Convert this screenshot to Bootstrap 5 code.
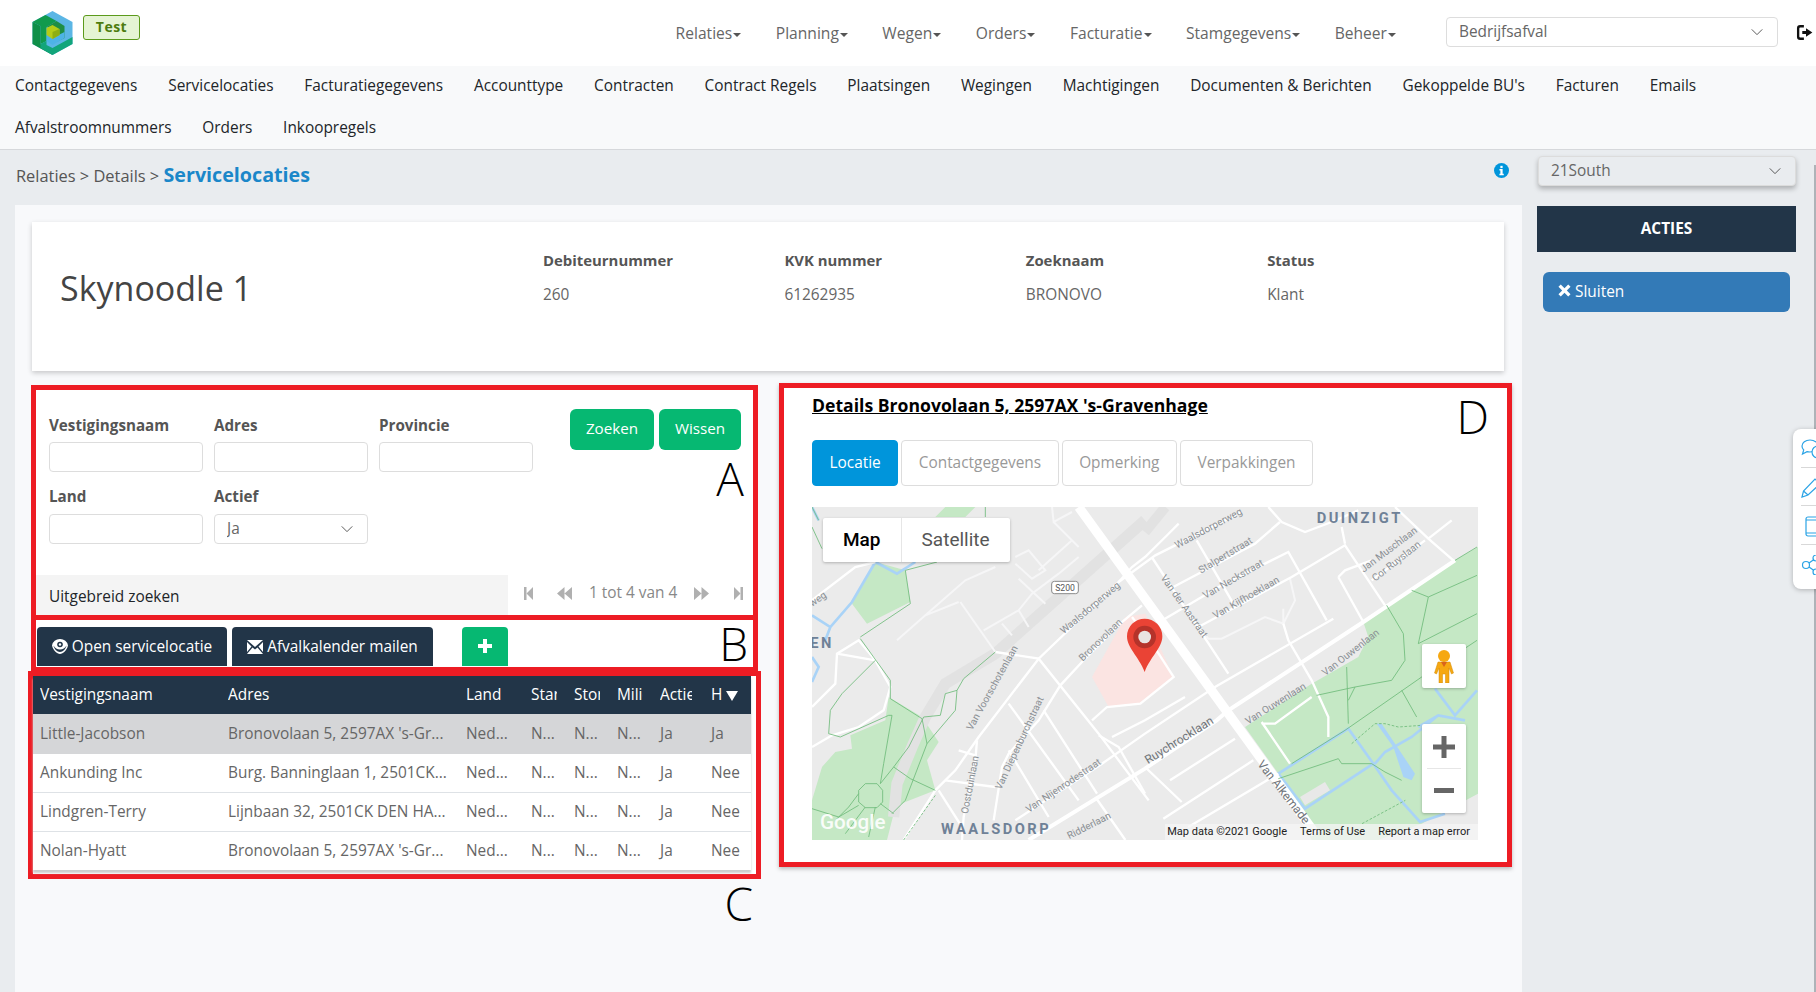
<!DOCTYPE html>
<html lang="nl">
<head>
    <meta charset="UTF-8">
    <meta name="viewport" content="width=device-width, initial-scale=1.0">
    <title>Relaties - Servicelocaties</title>
    <link href="https://cdn.jsdelivr.net/npm/bootstrap@5.3.0/dist/css/bootstrap.min.css" rel="stylesheet">
    <style>
        body { font-family: "Open Sans", sans-serif; font-size: 15.4px; color: #555; background: #e9ecef; overflow: hidden; position: relative; min-height: 992px; }
        .topbar { height: 66px; flex-wrap: nowrap; justify-content: flex-start; padding: 0 0 0 32px; }
        .logo-mark { width: 41px; height: 44px; }
        .env-tag { background: #e5f4d4; border: 1px solid #5c9a1c; border-radius: 3px; color: #4d7c0f; font-weight: 700; font-size: 14px; letter-spacing: .5px; width: 57px; height: 25px; line-height: 22px; text-align: center; margin: 0 0 11px 10px; }
        .mainmenu { gap: 34.5px; margin-left: auto; }
        .mainmenu .nav-link { padding: 0; color: #666; font-size: 15.6px; line-height: 20px; }
        .mainmenu .dropdown-toggle::after { margin-left: 1px; vertical-align: 2px; border-top: 4px solid #555; border-right: 4px solid transparent; border-left: 4px solid transparent; border-bottom: 0; }
        .select-box { background-image: url("data:image/svg+xml,%3csvg xmlns='http://www.w3.org/2000/svg' viewBox='0 0 16 16'%3e%3cpath fill='none' stroke='%23444' stroke-width='1' d='M2 5l6 6 6-6'/%3e%3c/svg%3e"); background-size: 18px 14px; background-position: right 11px center; font-size: 15.4px; color: #666; padding: 0 30px 0 12px; height: 30px; border-radius: 4px; border-color: #ddd; }
        .unit-select { width: 332px; margin: 0 18px 3px 50px; flex: none; }
        .logout-mark { width: 20px; height: 17px; flex: none; margin-bottom: 2px; }
        .subbar { background: #f8f9fa; border-bottom: 1px solid #d6d8db; padding: 1px 15px 3px; column-gap: 30.8px; row-gap: 4px; height: 84px; }
        .subbar a { color: #212529; text-decoration: none; line-height: 38px; }
        .crumbbar { height: 55px; padding: 0 20px 0 16px; }
        .crumb-text { font-size: 16.4px; margin-bottom: 5px; }
        .crumb-active { color: #1b87c9; font-size: 19.700px; font-weight: 700; }
        .info-mark { width: 15px; height: 15px; margin: 0 29px 15px auto; }
        .branch-select { width: 258px; background-color: #e9ecef; box-shadow: 0 3px 5px rgba(0,0,0,.25); border-color: #dcdcdc; margin-bottom: 13px; }
        .mainarea { padding-left: 15px; min-height: 787px; }
        .contentpane { width: 1507px; flex: none; background: #f8f9fb; padding: 17px 0 0 17px; }
        .sidepane { width: 294px; padding: 1px 0 0 15px; }
        .acties-head { width: 259px; height: 46px; background: #223548; color: #fff; font-weight: 700; padding-bottom: 1px; }
        .btn-sluiten { width: 247px; height: 40px; margin: 20px 0 0 6px; background: #337ab7; color: #fff; border: 0; font-size: 15.4px; text-align: left; padding: 0 15px 1px; }
        .headcard { width: 1472px; height: 149px; border: 0; border-radius: 0; box-shadow: 0 2px 5px rgba(0,0,0,.2); padding: 27px 0 0 28px; flex-direction: row; }
        .headcard h1 { width: 483px; flex: none; font-size: 34px; font-weight: 400; color: #444; margin: 19px 0 0; }
        .headfield { width: 241.4px; flex: none; font-size: 15.4px; line-height: 22px; color: #666; }
        .headfield b { display: block; margin-bottom: 13px; font-weight: 700; font-size: 14.9px; color: #555; }
        .lowerrow { margin-top: 14px; align-items: flex-start; }
        .leftcol { width: 727px; margin-left: -1px; }
        .redbox { border: 5px solid #ed1c24; background: #fff; position: relative; }
        .boxletter { position: absolute; color: #000; font-size: 46px; line-height: 46px; font-weight: 300; }
        .letter-a { right: 9px; top: 65px; }
        .letter-b { right: 5px; top: 0; }
        .letter-c { right: 3px; bottom: -52px; }
        .letter-d { right: 18px; top: 5px; }
        .boxa { height: 235px; }
        .fieldgrid { display: grid; grid-template-columns: repeat(3, 154px); column-gap: 11px; row-gap: 13px; padding: 25px 0 0 13px; height: 154px; }
        .fieldgrid label { display: block; font-weight: 700; font-size: 15.2px; line-height: 20px; margin-bottom: 7px; color: #555; }
        .fieldgrid > div:nth-child(n+4) label { margin-bottom: 8px; }
        .fieldgrid .form-control { height: 30px; border-color: #ddd; border-radius: 4px; }
        .searchbtns { gap: 5px; padding: 19px 12px 0 37px; }
        .btn-groen { background: #06b872; color: #fff; border: 0; height: 41px; padding: 0 0 2px; font-size: 15.2px; }
        .btn-zoeken { width: 84px; }
        .btn-wissen { width: 82px; }
        .searchfoot { margin-top: 31px; height: 40px; }
        .morefilters { width: 472px; background: #f4f4f4; color: #212529; padding: 11px 13px 0; line-height: 22px; }
        .pager-row { color: #888; padding: 0 0 4px 16px; }
        .pager-row svg { fill: #b0b0b0; height: 13px; flex: none; }
        .pager-count { margin: 0 17px; }
        .boxb { height: 52px; border-top: 0; padding: 7px 0 0 1px; gap: 5px; }
        .btn-donker { background: #223548; color: #fff; border: 0; height: 39px; padding: 0; font-size: 15.4px; border-radius: 4px 4px 0 0; }
        .btn-donker svg { vertical-align: -2px; }
        .btn-open { width: 190px; }
        .btn-mail { width: 201px; }
        .btn-plus { width: 46px; height: 39px; margin-left: 24px; border-radius: 4px 4px 0 0; }
        .boxc { width: 733px; margin: -1px 0 0 -3px; height: 208px; padding-right: 4px; background: #fff; }
        .loctable { table-layout: fixed; width: 718px; margin: 0; box-shadow: 0 3px 2px #ccc; }
        .loctable th { background: #223548; color: #fff; font-weight: 400; height: 38px; padding: 0 10px 0 7px; vertical-align: middle; border: 0; white-space: nowrap; }
        .loctable th span { display: block; overflow: hidden; }
        .loctable td { height: 39px; padding: 0 7px; vertical-align: middle; color: #666; white-space: nowrap; border-bottom: 1px solid #dee2e6; background: #fff; }
        .loctable tr.is-picked td { background: #d5d6d8; border-color: #d5d6d8; }
        .loctable tr:last-child td { border-bottom: 0; }
        .c-naam { width: 188px; } .c-adres { width: 238px; } .c-land { width: 65px; } .c-kort { width: 43px; } .c-actief { width: 51px; } .c-h { width: 47px; }
        .loctable th.kolom-a { padding-right: 12px; }
        .loctable th.kolom-h { padding-right: 4px; }
        .boxd { width: 733px; height: 484px; margin: -2px 0 0 21px; padding: 0 0 0 28px; box-shadow: 0 2px 4px rgba(0,0,0,.25); }
        .boxd h2 { font-size: 17.6px; font-weight: 700; color: #000; text-decoration: underline; margin: 0; padding-top: 5px; line-height: 24px; }
        .locatie-tabs { gap: 3px; margin-top: 23px; }
        .locatie-tabs .nav-link { height: 46px; line-height: 43px; padding: 0 16.5px; color: #999; border: 1px solid #ddd; border-radius: 4px; font-size: 15.4px; }
        .locatie-tabs .nav-link.active { background: #0095db; border-color: #0095db; color: #fff; }
        .mapframe { position: relative; width: 666px; height: 333px; margin-top: 21px; overflow: hidden; }
        .mapframe > svg { display: block; }
        .map-type { position: absolute; left: 11px; top: 11px; height: 44px; background: #fff; box-shadow: 0 1px 3px rgba(0,0,0,.25); border-radius: 2px; font-family: Roboto, sans-serif; font-size: 19px; line-height: 44px; }
        .map-type span { display: inline-block; padding: 0 20px; color: #565656; }
        .map-type .is-on { color: #000; font-weight: 500; border-right: 1px solid #e6e6e6; }
        .map-ctl { position: absolute; left: 610px; width: 44px; background: #fff; box-shadow: 0 1px 3px rgba(0,0,0,.25); border-radius: 2px; }
        .map-peg { top: 137px; height: 44px; padding: 6px 0 0 12px; }
        .map-zoom { top: 217px; height: 89px; }
        .map-zoom svg { display: block; }
        .map-credit { position: absolute; right: 0; bottom: 0; height: 16px; background: rgba(245,245,245,.75); font-family: Roboto, sans-serif; font-size: 11px; line-height: 16px; color: #222; padding: 0 8px 0 2px; display: flex; gap: 13px; white-space: nowrap; }
        .sidewidget { position: absolute; left: 1793px; top: 429px; width: 40px; height: 160px; background: #fff; border-radius: 8px; box-shadow: 0 1px 5px rgba(0,0,0,.25); padding-left: 8px; }
        .sidewidget div { height: 38.5px; border-bottom: 1px solid #d8d8d8; padding-top: 10px; }
        .sidewidget div:last-child { border-bottom: 0; }
        .sidewidget svg { display: block; fill: none; stroke: #2ba3e5; stroke-width: 1.2; }
        .scrollline { position: absolute; right: 0; top: 165px; bottom: 0; width: 2px; background: #aeb3b8; }
    </style>
</head>
<body>
    <!-- Top navigation -->
    <nav class="navbar bg-white topbar">
        <svg class="logo-mark" viewBox="0 0 40 44">
            <polygon points="20,0 40,11 40,33 20,44 0,33 0,11" fill="#5bb6e5"/>
            <polygon points="0,11 13,4 24,10 14,16 14,30 8,33 8,15" fill="#119a4d"/>
            <polygon points="0,11 8,15 8,33 20,44 0,33" fill="#0f8f48"/>
            <polygon points="14,16 24,10 32,15 32,27 24,31 24,20 18,17" fill="#1f8e44"/>
            <polygon points="14,30 14,34 20,37 40,26 40,33 20,44 8,37 8,33" fill="#12a57a"/>
            <polygon points="14,30 14,24 20,27 32,21 32,27 20,34" fill="#4db3e6"/>
            <polygon points="14,17 20,14 27,18 27,24 20,28 14,24" fill="#b5cc18"/>
            <polygon points="20,21 27,18 27,24 20,28" fill="#8fae12"/>
        </svg>
        <div class="env-tag">Test</div>
        <div class="nav mainmenu flex-nowrap">
            <a class="nav-link dropdown-toggle" href="#">Relaties</a>
            <a class="nav-link dropdown-toggle" href="#">Planning</a>
            <a class="nav-link dropdown-toggle" href="#">Wegen</a>
            <a class="nav-link dropdown-toggle" href="#">Orders</a>
            <a class="nav-link dropdown-toggle" href="#">Facturatie</a>
            <a class="nav-link dropdown-toggle" href="#">Stamgegevens</a>
            <a class="nav-link dropdown-toggle" href="#">Beheer</a>
        </div>
        <select class="form-select select-box unit-select"><option>Bedrijfsafval</option></select>
        <svg class="logout-mark" viewBox="0 0 18 16"><path fill="#111" d="M7 1H3.500A3 3 0 0 0 .5 4v8a3 3 0 0 0 3 3H7v-2.200H3.700a1 1 0 0 1-1-1V4.200a1 1 0 0 1 1-1H7zM9 4v2.500H5.500v3H9V12l6-4z"/></svg>
    </nav>

    <!-- Tabs of the relation -->
    <div class="d-flex flex-wrap align-content-start subbar">
        <a href="#">Contactgegevens</a>
        <a href="#">Servicelocaties</a>
        <a href="#">Facturatiegegevens</a>
        <a href="#">Accounttype</a>
        <a href="#">Contracten</a>
        <a href="#">Contract Regels</a>
        <a href="#">Plaatsingen</a>
        <a href="#">Wegingen</a>
        <a href="#">Machtigingen</a>
        <a href="#">Documenten &amp; Berichten</a>
        <a href="#">Gekoppelde BU's</a>
        <a href="#">Facturen</a>
        <a href="#">Emails</a>
        <a href="#">Afvalstroomnummers</a>
        <a href="#">Orders</a>
        <a href="#">Inkoopregels</a>
    </div>

    <!-- Breadcrumb -->
    <div class="d-flex align-items-center crumbbar">
        <span class="crumb-text">Relaties &gt; Details &gt; <span class="crumb-active">Servicelocaties</span></span>
        <svg class="info-mark" viewBox="0 0 16 16"><circle cx="8" cy="8" r="8" fill="#0095db"/><rect x="6.800" y="3" width="2.400" height="2.400" fill="#fff"/><path fill="#fff" d="M5.800 6.500h3.400v5h1.200v1.500H5.800v-1.500h1v-3.500h-1z"/></svg>
        <select class="form-select select-box branch-select"><option>21South</option></select>
    </div>

    <div class="d-flex mainarea">
        <div class="contentpane">
            <div class="card headcard">
                <h1>Skynoodle 1</h1>
                <div class="headfield"><b>Debiteurnummer</b>260</div>
                <div class="headfield"><b>KVK nummer</b>61262935</div>
                <div class="headfield"><b>Zoeknaam</b>BRONOVO</div>
                <div class="headfield"><b>Status</b>Klant</div>
            </div>

            <div class="d-flex lowerrow">
                <div class="leftcol">
                    <!-- A: search form -->
                    <div class="redbox boxa">
                        <span class="boxletter letter-a">A</span>
                        <div class="d-flex">
                            <div class="fieldgrid">
                                <div><label>Vestigingsnaam</label><input type="text" class="form-control"></div>
                                <div><label>Adres</label><input type="text" class="form-control"></div>
                                <div><label>Provincie</label><input type="text" class="form-control"></div>
                                <div><label>Land</label><input type="text" class="form-control"></div>
                                <div><label>Actief</label><select class="form-select select-box"><option>Ja</option></select></div>
                            </div>
                            <div class="d-flex align-items-start searchbtns">
                                <button class="btn btn-groen btn-zoeken">Zoeken</button>
                                <button class="btn btn-groen btn-wissen">Wissen</button>
                            </div>
                        </div>
                        <div class="d-flex searchfoot">
                            <div class="morefilters">Uitgebreid zoeken</div>
                            <div class="d-flex align-items-center pager-row">
                                <svg viewBox="0 0 9 13" width="9"><rect width="2.500" height="13"/><path d="M9 0v13L2.500 6.500z"/></svg>
                                <svg viewBox="0 0 15 13" width="15" class="ms-4"><path d="M7.500 0v13L0 6.500zM15 0v13L7.500 6.500z"/></svg>
                                <span class="pager-count">1 tot 4 van 4</span>
                                <svg viewBox="0 0 15 13" width="15"><path d="M0 0v13l7.500-6.500zM7.500 0v13L15 6.500z"/></svg>
                                <svg viewBox="0 0 9 13" width="11" class="ms-4"><rect x="6.500" width="2.500" height="13"/><path d="M0 0v13l6.500-6.500z"/></svg>
                            </div>
                        </div>
                    </div>

                    <!-- B: actions -->
                    <div class="redbox boxb d-flex">
                        <span class="boxletter letter-b">B</span>
                        <button class="btn btn-donker btn-open">
                            <svg viewBox="0 0 16 15" width="16" height="15"><path fill="#fff" d="M8 0a8 7.500 0 0 1 8 6.500C15 11 11 15 8 15S1 11 0 6.500A8 7.500 0 0 1 8 0z"/><path fill="#223548" d="M1.500 6.500C3 9 5 10.500 8 10.500s5-1.500 6.500-4c-.5 3-3.500 6.500-6.500 6.500S2 9.500 1.500 6.500z"/><circle cx="8" cy="5.500" r="2.800" fill="#223548"/><circle cx="8" cy="5.500" r="1.200" fill="#fff"/></svg>
                            Open servicelocatie
                        </button>
                        <button class="btn btn-donker btn-mail">
                            <svg viewBox="0 0 16 14" width="16" height="14"><path fill="#fff" d="M0 0h16L8 7zM0 2l4.500 4.500L0 12zM16 2v10l-4.500-5.500zM5.500 7.500 8 9.500l2.500-2L16 14H0z"/></svg>
                            Afvalkalender mailen
                        </button>
                        <button class="btn btn-groen btn-plus">
                            <svg viewBox="0 0 14 14" width="14" height="14" class="d-block mx-auto"><path fill="#fff" d="M5 0h4v5h5v4H9v5H5V9H0V5h5z"/></svg>
                        </button>
                    </div>

                    <!-- C: locations -->
                    <div class="redbox boxc">
                        <span class="boxletter letter-c">C</span>
                        <table class="table loctable">
                            <colgroup>
                                <col class="c-naam"><col class="c-adres"><col class="c-land"><col class="c-kort"><col class="c-kort"><col class="c-kort"><col class="c-actief"><col class="c-h">
                            </colgroup>
                            <thead>
                                <tr>
                                    <th><span>Vestigingsnaam</span></th>
                                    <th><span>Adres</span></th>
                                    <th><span>Land</span></th>
                                    <th><span>Starter</span></th>
                                    <th><span>Stort</span></th>
                                    <th><span>Milieu</span></th>
                                    <th class="kolom-a"><span>Actief</span></th>
                                    <th class="kolom-h"><span>H&nbsp;<svg viewBox="0 0 12 10" width="12" height="10"><path fill="#fff" d="M0 0h12L6 10z"/></svg></span></th>
                                </tr>
                            </thead>
                            <tbody id="locRows"></tbody>
                        </table>
                    </div>
                </div>

                <!-- D: details of the selected location -->
                <div class="redbox boxd">
                    <span class="boxletter letter-d">D</span>
                    <h2>Details Bronovolaan 5, 2597AX 's-Gravenhage</h2>
                    <div class="nav locatie-tabs">
                        <a class="nav-link active" href="#">Locatie</a>
                        <a class="nav-link" href="#">Contactgegevens</a>
                        <a class="nav-link" href="#">Opmerking</a>
                        <a class="nav-link" href="#">Verpakkingen</a>
                    </div>
                    <div class="mapframe">
                        <svg viewBox="0 0 1998 999" width="666" height="333" font-family="Roboto, sans-serif">
                            <rect width="1998" height="999" fill="#ebebeb"/>
                            <!-- parks -->
                            <g fill="#c5e8c5">
                                <polygon points="1929,160 1719,295 1654,345 1669,390 1639,450 1499,530 1299,660 1399,800 1499,999 1700,999 1829,950 1998,860 1998,120"/>
                                <polygon points="190,165 280,190 295,285 165,350 120,290"/>
                                <polygon points="400,0 490,0 460,30 370,30"/>
                                <polygon points="230,570 330,630 380,705 345,760 370,850 280,885 250,900 225,999 0,999 0,880 30,780 70,735 120,725 115,685 220,640"/>
                            </g>
                            <polygon points="1464,870 1539,825 1554,850 1479,895" fill="#e8e8e8"/>
                            <polygon points="940,330 1000,320 1084,510 985,590 890,600 840,510" fill="#fbe4e2"/>
                            <!-- rail -->
                            <path d="M999,40 550,440 400,530 340,630 300,720 255,830 245,930" fill="none" stroke="#e2e2e2" stroke-width="34"/>
                            <path d="M999,75 1060,0" fill="none" stroke="#e2e2e2" stroke-width="30"/>
                            <!-- water -->
                            <g fill="none" stroke="#a9d3f7" stroke-width="8">
                                <path d="M190,165 120,285 55,360 0,325M55,360 40,400M0,450 20,480 0,525M190,165 255,200 310,165M0,0 20,40"/>
                                <path d="M1399,800 1609,665 1684,770 1479,905zM1689,770 1719,735 1799,690 1879,625 1959,640M1869,545 1929,625 1995,550M1879,625 1819,660M1684,770 1739,850 1824,945 1899,920"/>
                            </g>
                            <polygon points="1694,650 1709,650 1809,800 1799,820 1774,810 1744,720" fill="#a9d3f7"/>
                            <!-- minor roads -->
                            <g fill="none" stroke="#f6f6f7" stroke-width="6">
                                <path d="M255,400 340,325 460,220 550,180M445,285 550,435M515,370 620,310 660,260 740,200 800,150M570,350 600,385M620,310 650,360M610,150 650,130 700,190 660,215 610,170M680,190 780,100M620,215 700,290M720,0 725,45 780,15M725,45 800,120M340,325 440,285"/>
                                <path d="M1159,360 1189,395 1229,395 1359,330 1414,350 1449,280 1434,215M1414,305 1414,350"/>
                            </g>
                            <!-- roads -->
                            <g fill="none" stroke="#fff" stroke-width="7">
                                <path d="M0,280 130,180 190,165M0,600 70,530 75,440 140,400 190,460 235,540 215,610 140,660 60,685 0,720M75,440 190,460"/>
                                <path d="M500,690 680,455 920,225 1030,145 1289,15M500,690 430,790 370,850 275,999"/>
                                <path d="M545,940 570,780 590,740 680,640 745,535 810,465 930,345 990,295"/>
                                <path d="M550,435 680,455 860,680 1010,880M590,590 800,880M695,610 855,860M590,730 710,930M850,870 940,999"/>
                                <path d="M495,700 490,760 455,930 450,999M400,820 550,840M440,730 490,745M380,850 450,960"/>
                                <path d="M610,940 870,770 999,680 1209,540 1564,335"/>
                                <path d="M840,640 885,600 985,590 1085,510 1040,440 960,330"/>
                                <path d="M900,690 999,640 1119,570M860,685 920,720 999,860"/>
                                <path d="M1019,150 1249,500M1154,100 1264,290M1074,245 1329,110 1404,45M1059,335 1229,235 1429,135 1544,340M1159,360 1439,210 1599,115 1719,295M1579,210 1654,345M1579,210 1599,190 1679,160M1679,220 1839,100"/>
                                <path d="M1369,0 1409,45 1479,75 1559,45 1639,10M1749,0 1849,95 1924,160M1589,60 1599,110M1849,95 1919,40"/>
                                <path d="M1414,350 1429,400 1499,520 1549,630 1549,690M1349,650 1389,650 1499,570M1349,645 1434,770"/>
                                <path d="M1074,820 1269,695M1054,935 1324,760M999,780 1109,885M1129,960 1399,800"/>
                                <path d="M920,225 960,180 999,150 1060,90 1100,50"/>
                            </g>
                            <path d="M650,999 999,785 1214,640 1249,610 1654,345 1929,160" fill="none" stroke="#fff" stroke-width="12"/>
                            <path d="M800,0 1510,980" fill="none" stroke="#fff" stroke-width="28"/>
                            <!-- footpaths -->
                            <g fill="none" stroke="#6dbb7a" stroke-width="2.500">
                                <path d="M145,390 295,290 280,190 375,165M145,395 235,520 235,575 330,635 345,710 430,610 435,550 400,560 385,625 335,630 290,720 245,780 295,815 370,850M345,710 280,880 240,920M550,435 455,515 435,550"/>
                                <path d="M190,460 90,560 55,610 50,680 85,690 230,625 240,625 215,770 205,830M205,830 245,780M140,895 80,930 0,905M160,900 100,980M190,900 170,990M205,890 245,920M140,860 110,900 75,935M0,60 30,125M520,0 520,30M0,0 20,40"/>
                                <polygon points="160,830 195,830 212,850 212,885 195,902 160,902 140,885 140,850"/>
                                <path d="M1439,770 1599,670 1829,510 1995,400M1724,295 1774,380 1779,460 1739,520 1629,540 1514,565M1604,480 1609,650M1769,550 1814,630M1799,250 1849,270 1819,410M1849,270 1995,205M1819,410 1995,320M1929,160 1995,120M1629,540 1609,580M1399,815 1579,755 1589,770 1679,770 1719,795 1769,820"/>
                                <path d="M1619,710 1689,650 1719,650 1759,660 1829,655M275,999 370,865M1650,950 1780,880" stroke-dasharray="8 5"/>
                            </g>
                            <!-- road names -->
                            <g fill="#8a8f94" font-size="30">
                                <text transform="translate(755,382) rotate(-40)">Waalsdorperweg</text>
                                <text transform="translate(812,464) rotate(-44)">Bronovolaan</text>
                                <text transform="translate(480,672) rotate(-61)">Van Voorschotenlaan</text>
                                <text transform="translate(567,850) rotate(-65)">Van Diepenburchstraat</text>
                                <text transform="translate(467,922) rotate(-79)">Oostduinlaan</text>
                                <text transform="translate(650,918) rotate(-34)">Van Nijenrodestraat</text>
                                <text transform="translate(772,997) rotate(-27)">Ridderlaan</text>
                                <text transform="translate(0,300) rotate(-35)">weg</text>
                                <text transform="translate(1095,125) rotate(-28)">Waalsdorperweg</text>
                                <text transform="translate(1167,200) rotate(-31)">Stalpertstraat</text>
                                <text transform="translate(1180,276) rotate(-30)">Van Neckstraat</text>
                                <text transform="translate(1210,336) rotate(-30)">Van Kijfhoeklaan</text>
                                <text transform="translate(1045,212) rotate(55)">Van der Aastraat</text>
                                <text transform="translate(1655,197) rotate(-37)">Jan Muschlaan</text>
                                <text transform="translate(1690,224) rotate(-38)">Cor Ruyslaan</text>
                                <text transform="translate(1540,508) rotate(-38)">Van Ouwenlaan</text>
                                <text transform="translate(1308,653) rotate(-32)">Van Ouwenlaan</text>
                            </g>
                            <g fill="#6f7479" font-size="36">
                                <text transform="translate(1008,772) rotate(-32)">Ruychrocklaan</text>
                                <text transform="translate(1335,772) rotate(52)">Van Alkemade</text>
                            </g>
                            <g fill="#6f8197" font-size="44" font-weight="700" letter-spacing="7.500">
                                <text x="1514" y="48">DUINZIGT</text>
                                <text x="387" y="980">WAALSDORP</text>
                                <text x="-5" y="424">EN</text>
                            </g>
                            <!-- route shield -->
                            <rect x="719" y="223" width="80" height="37" rx="8" fill="#fff" stroke="#8a8a8a" stroke-width="3"/>
                            <text x="759" y="251" text-anchor="middle" font-size="26" fill="#555">S200</text>
                            <!-- marker -->
                            <path d="M998,335a53,53 0 0 1 53,53c0,35 -35,60 -53,107c-18,-47 -53,-72 -53,-107a53,53 0 0 1 53,-53z" fill="#ea4335"/>
                            <circle cx="998" cy="390" r="34" fill="#b5332a"/>
                            <circle cx="998" cy="390" r="19" fill="#e9e4e2"/>
                            <text x="24" y="966" font-size="62" font-weight="500" fill="#fff" opacity=".9">Google</text>
                        </svg>
                        <div class="map-type"><span class="is-on">Map</span><span>Satellite</span></div>
                        <div class="map-ctl map-peg">
                            <svg viewBox="0 0 20 33" width="20" height="33"><circle cx="10" cy="6" r="6" fill="#f6a811"/><path fill="#f6a811" stroke="#d08a08" stroke-width=".5" d="M4 12h12l3.500 11-2 1-2.500-6v15h-3.500v-9h-3v9H5V18l-2.500 6-2-1z"/><path d="M7 12h6l-3 5z" fill="#d9641c"/></svg>
                        </div>
                        <div class="map-ctl map-zoom">
                            <svg viewBox="0 0 44 89" width="44" height="89"><path fill="#666" d="M19.500 12h5v8.500H33v5h-8.500V34h-5v-8.500H11v-5h8.500z"/><rect x="5" y="44" width="34" height="1" fill="#e6e6e6"/><rect x="12" y="64" width="20" height="5" fill="#666"/></svg>
                        </div>
                        <div class="map-credit"><span>Map data ©2021 Google</span><span>Terms of Use</span><span>Report a map error</span></div>
                    </div>
                </div>
            </div>
        </div>

        <!-- Actions -->
        <div class="sidepane">
            <div class="d-flex align-items-center justify-content-center acties-head">ACTIES</div>
            <button class="btn btn-sluiten">
                <svg viewBox="0 0 14 14" width="13" height="13" class="align-baseline"><path fill="#fff" d="M3 .5 7 4.500 11 .5l2.500 2.500-4 4 4 4-2.500 2.500-4-4-4 4L.5 11l4-4-4-4z"/></svg>
                Sluiten
            </button>
        </div>
    </div>

    <div class="scrollline"></div>

    <!-- Feedback widget on the right edge -->
    <div class="sidewidget">
        <div><svg viewBox="0 0 24 20" width="24" height="20"><path d="M9 1c4.500 0 8 2.500 8 6s-3.500 6-8 6c-1 0-2-.1-3-.4L1.500 15l1.200-4C1.600 10 1 8.600 1 7c0-3.500 3.500-6 8-6z"/><circle cx="17" cy="13" r="6" fill="#fff"/></svg></div>
        <div><svg viewBox="0 0 16 20" width="16" height="20"><path d="M1 19l1.500-6L14 1l5 5L7 17zM2.500 13 7 17"/></svg></div>
        <div><svg viewBox="0 0 16 21" width="16" height="21" class="ms-1"><rect x="1" y="1" width="14" height="19" rx="2"/><path d="M1 4h14M1 17h14"/></svg></div>
        <div><svg viewBox="0 0 16 20" width="16" height="20"><circle cx="5" cy="10" r="3.500"/><circle cx="15" cy="3" r="3"/><circle cx="15" cy="17" r="3"/><path d="M8 8l5-3.500M8 12l5 3.500"/></svg></div>
    </div>

    <script>
        // Fill the locations table
        const locations = [
            { naam: 'Little-Jacobson', adres: "Bronovolaan 5, 2597AX 's-Gr...", h: 'Ja', picked: true },
            { naam: 'Ankunding Inc', adres: 'Burg. Banninglaan 1, 2501CK...', h: 'Nee' },
            { naam: 'Lindgren-Terry', adres: 'Lijnbaan 32, 2501CK DEN HA...', h: 'Nee' },
            { naam: 'Nolan-Hyatt', adres: "Bronovolaan 5, 2597AX 's-Gr...", h: 'Nee' }
        ];
        document.getElementById('locRows').innerHTML = locations.map(loc => `
            <tr class="${loc.picked ? 'is-picked' : ''}">
                <td>${loc.naam}</td><td>${loc.adres}</td><td>Ned...</td>
                <td>N...</td><td>N...</td><td>N...</td><td>Ja</td><td>${loc.h}</td>
            </tr>`).join('');
    </script>
    <script src="https://cdn.jsdelivr.net/npm/bootstrap@5.3.0/dist/js/bootstrap.bundle.min.js"></script>
</body>
</html>
